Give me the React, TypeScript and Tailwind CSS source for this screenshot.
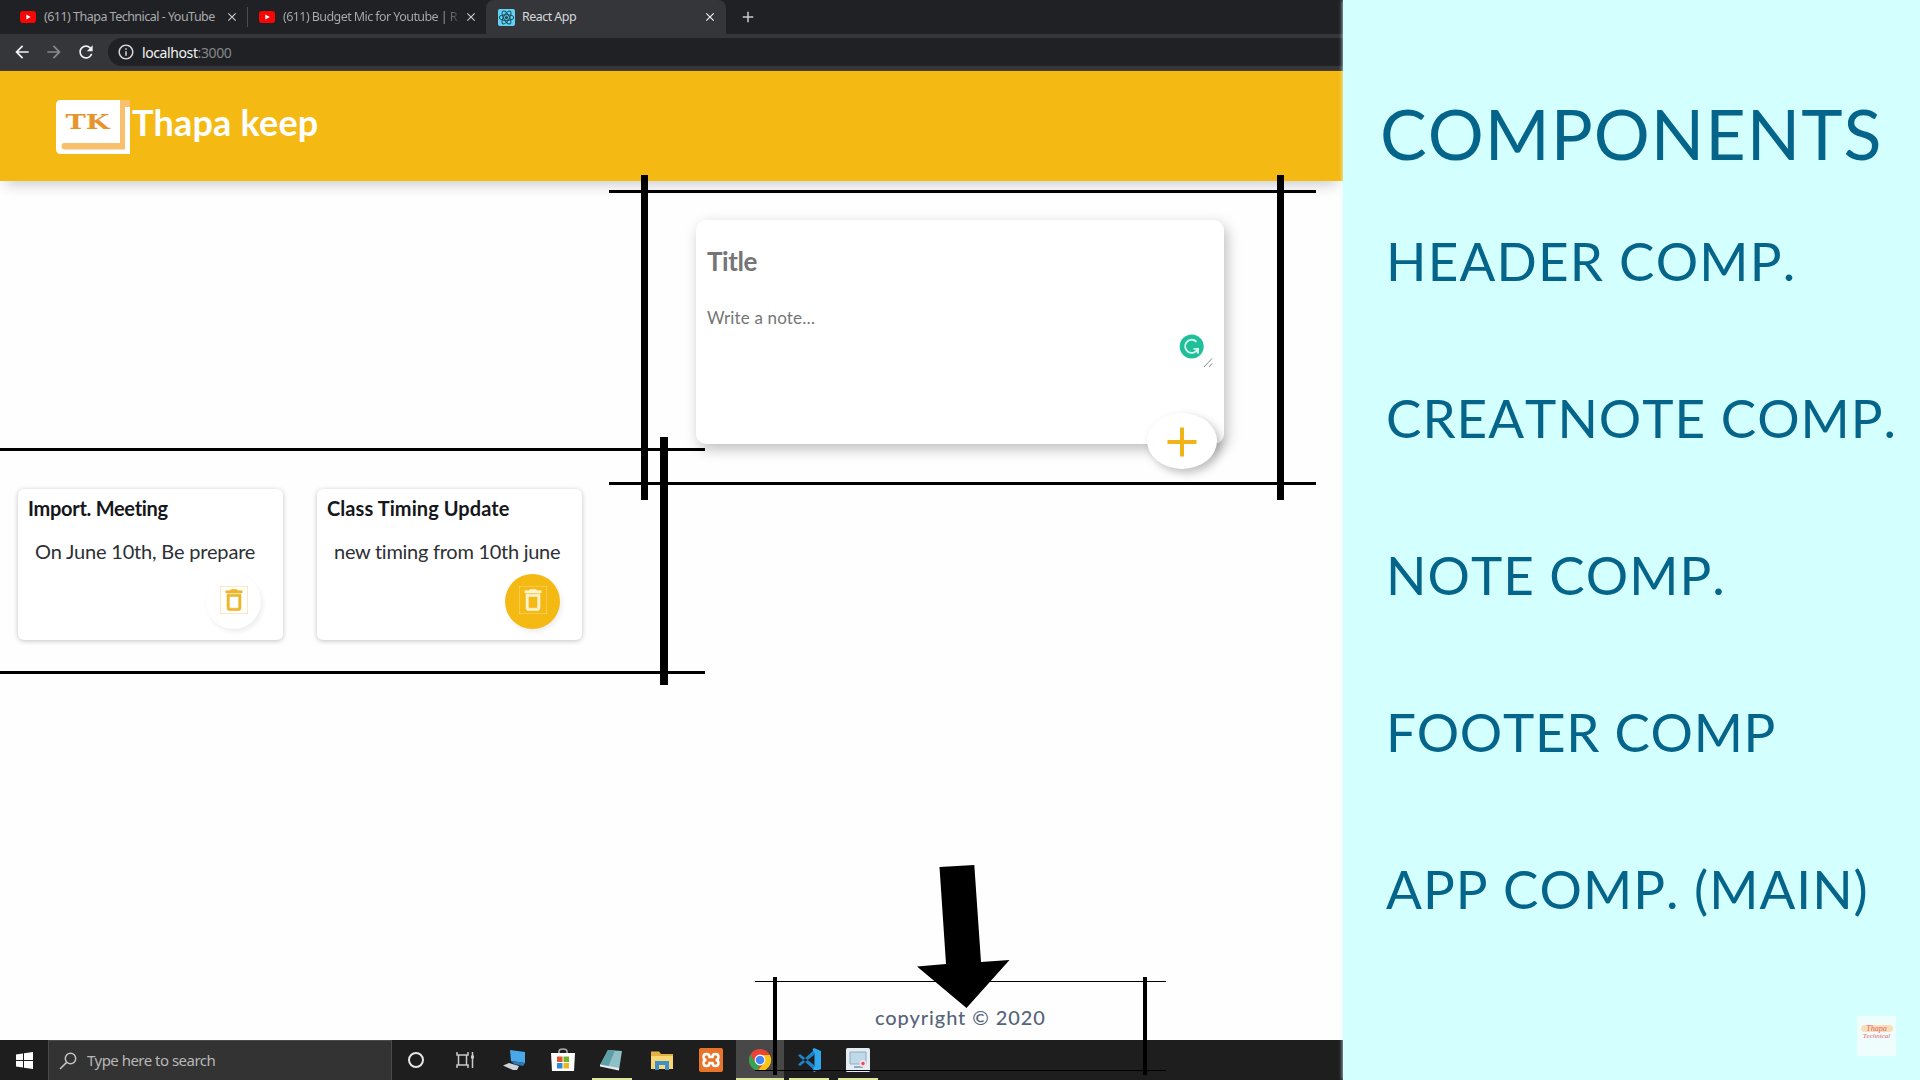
import React from "react";
import { MdArrowBack, MdArrowForward, MdRefresh, MdInfoOutline, MdClose, MdAdd, MdDeleteOutline } from "react-icons/md";

const YouTubeIcon = () => (
  <svg viewBox="0 0 16 12" className="h-3 w-4 shrink-0">
    <rect width="16" height="12" rx="3" fill="#f80606" />
    <path d="M6.3 3.4 10.8 6 6.3 8.6z" fill="#fff" />
  </svg>
);

const ReactIcon = () => (
  <svg viewBox="0 0 18 18" className="h-[17px] w-[17px] shrink-0">
    <rect width="18" height="18" rx="2" fill="#61d4f5" />
    <g fill="none" stroke="#1d4b5c" strokeWidth="1.1">
      <ellipse cx="9" cy="9" rx="7.6" ry="3" />
      <ellipse cx="9" cy="9" rx="7.6" ry="3" transform="rotate(60 9 9)" />
      <ellipse cx="9" cy="9" rx="7.6" ry="3" transform="rotate(120 9 9)" />
    </g>
    <circle cx="9" cy="9" r="1.7" fill="#1d4b5c" />
  </svg>
);

function BrowserChrome() {
  return (
    <div className="shrink-0 bg-[#35363a] font-['Noto_Sans',sans-serif]">
      <div className="flex h-[34px] items-center bg-[#202124] text-[12.5px] text-[#a9abae]">
        <div className="flex h-full w-[247px] items-center pl-5">
          <YouTubeIcon />
          <span className="ml-2 w-[181px] whitespace-nowrap tracking-[-0.52px]">(611) Thapa Technical - YouTube</span>
          <MdClose className="h-[14px] w-[14px] text-[#c8cacc]" />
        </div>
        <div className="h-5 w-px bg-[#4a4c50]" />
        <div className="flex h-full w-[238px] items-center pl-[11px]">
          <YouTubeIcon />
          <span className="ml-2 w-[181px] whitespace-nowrap bg-linear-to-r from-[#a9abae] from-88% to-[#202124] to-100% bg-clip-text tracking-[-0.57px] text-transparent">
            (611) Budget Mic for Youtube | R
          </span>
          <MdClose className="h-[14px] w-[14px] text-[#c8cacc]" />
        </div>
        <div className="flex h-full w-[240px] items-center rounded-t-lg bg-[#35363a] pl-3 text-[#d4d6d9]">
          <ReactIcon />
          <span className="ml-[7px] w-[181px] tracking-[-0.55px]">React App</span>
          <MdClose className="h-[14px] w-[14px] text-[#f1f3f4]" />
        </div>
        <MdAdd className="ml-[13px] h-[18px] w-[18px] text-[#c8cacc]" />
      </div>
      <div className="flex h-[37px] items-start border-b border-[#4d3f18] pt-1">
        <div className="flex h-7 w-[108px] items-center">
          <MdArrowBack className="ml-3 h-5 w-5 text-[#f1f3f4]" />
          <MdArrowForward className="ml-3 h-5 w-5 text-[#87898c]" />
          <MdRefresh className="ml-3 h-5 w-5 text-[#f1f3f4]" />
        </div>
        <div className="flex h-7 flex-1 items-center rounded-l-full bg-[#202124] pl-[9px]">
          <MdInfoOutline className="h-[18px] w-[18px] text-[#d4d6d9]" />
          <span className="ml-[7px] text-[14px] tracking-[-0.4px] text-[#85878a]">
            <span className="text-[#f1f3f4]">localhost</span>:3000
          </span>
        </div>
      </div>
    </div>
  );
}

const BookLogo = () => (
  <svg viewBox="0 0 74 54" className="mt-px h-[54px] w-[74px] shrink-0">
    <path d="M5 0H74V54H5Q0 54 0 49V5Q0 0 5 0Z" fill="#f8c06c" />
    <path d="M5 0H64V43H8Q5.500 43 5.500 46T8 49.500H69V7H74V54H5Q0 54 0 49V5Q0 0 5 0Z" fill="#fff" />
    <text x="9.500" y="29" textLength="44" lengthAdjust="spacingAndGlyphs" fill="#e6942c" className="font-['DejaVu_Serif',serif] text-[20px] font-bold">
      TK
    </text>
  </svg>
);

function Header() {
  return (
    <header className="relative z-10 flex h-[110px] shrink-0 bg-[#f5b914] pl-14 pt-[28px] shadow-[0_10px_12px_-6px_rgba(60,60,80,0.24)]">
      <BookLogo />
      <h1 className="ml-[2px] mt-px text-[36px] font-bold leading-[44px] tracking-[0.2px] text-white">Thapa keep</h1>
    </header>
  );
}

function CreateNote() {
  return (
    <section className="relative ml-[696px] mt-[39px] flex h-[224px] w-[528px] shrink-0 flex-col rounded-[10px] bg-white pl-[11px] pt-[25px] text-[#757575] shadow-[3px_5px_14px_rgba(0,0,0,0.26)]">
      <h2 className="text-[26px] font-bold leading-8 tracking-[-0.4px]">Title</h2>
      <p className="mt-[31px] text-[17px] leading-5 tracking-[0.15px]">Write a note…</p>
      <svg viewBox="0 0 36 36" className="absolute left-[482px] top-[112px] h-9 w-9">
        <circle cx="13.700" cy="14.500" r="12" fill="#1fbf99" />
        <path d="M18.500 9.800A6.600 6.600 0 1 0 19.500 17.500" fill="none" stroke="#d5f7ee" strokeWidth="1.8" />
        <path d="M15.500 16H21V21.500H18.800V17.800H15.500Z" fill="#d5f7ee" />
        <path d="M26 35 34 26.500M31 35 34 31.500" stroke="#888" strokeWidth="1" />
      </svg>
      <button className="absolute left-[451px] top-[193px] flex h-14 w-[70px] items-center justify-center rounded-[50%] bg-white shadow-[4px_4px_9px_rgba(0,0,0,0.25)]">
        <svg viewBox="0 0 30 30" className="mt-px h-[30px] w-[30px]">
          <path d="M15 .5V29.500M.5 15H29.500" stroke="#f0b418" strokeWidth="4" />
        </svg>
      </button>
    </section>
  );
}

type NoteProps = { title: string; body: string; titleClass: string; bodyClass: string; buttonClass: string };

function Note({ title, body, titleClass, bodyClass, buttonClass }: NoteProps) {
  return (
    <article className="flex h-[151px] w-[265px] flex-col rounded-md bg-white pl-[10px] pr-[22px] pt-[7px] shadow-[0_1px_5px_rgba(0,0,0,0.24)]">
      <h3 className={"whitespace-nowrap text-[20px] font-bold leading-6 text-[#15171a] " + titleClass}>{title}</h3>
      <p className={"mt-[19px] whitespace-nowrap pl-[7px] text-[20px] leading-6 text-[#2d2f33] " + bodyClass}>{body}</p>
      <button className={"mt-[11px] flex h-[55px] w-[55px] shrink-0 items-center justify-center self-end rounded-full " + buttonClass}>
        <MdDeleteOutline className="mb-[4px] h-7 w-7 stroke-current [stroke-width:0.5]" />
      </button>
    </article>
  );
}

const Line = ({ className }: { className: string }) => <div className={"absolute z-20 bg-black " + className} />;

function Markers() {
  return (
    <>
      <Line className="left-[609px] top-[190px] h-[3px] w-[707px]" />
      <Line className="left-[609px] top-[482px] h-[3px] w-[707px]" />
      <Line className="left-[641px] top-[175px] h-[325px] w-[7px]" />
      <Line className="left-[1277px] top-[175px] h-[325px] w-[7px]" />
      <Line className="left-0 top-[448px] h-[3px] w-[705px]" />
      <Line className="left-0 top-[671px] h-[3px] w-[705px]" />
      <Line className="left-[660px] top-[437px] h-[248px] w-[8px]" />
      <Line className="left-[755px] top-[981px] h-px w-[411px]" />
      <Line className="left-[755px] top-[1070px] h-px w-[411px]" />
      <Line className="left-[773px] top-[977px] h-[98px] w-[4px]" />
      <Line className="left-[1143px] top-[977px] h-[98px] w-[4px]" />
      <svg viewBox="0 0 93 143" className="absolute left-[917px] top-[865px] z-20 h-[143px] w-[93px]">
        <path d="M22.500 2 57.300 0 64 97 92.500 95 49.500 143 0 101.500 29 99Z" fill="#000" />
      </svg>
    </>
  );
}

const taskIcons: { width: string; state: string; icon: React.ReactNode }[] = [
  { width: "w-12", state: "", icon: <circle cx="12" cy="12" r="7" fill="none" stroke="#e6e6e6" strokeWidth="2" /> },
  {
    width: "w-[49px]",
    state: "",
    icon: (
      <g fill="none" stroke="#c9c9c9" strokeWidth="1.5">
        <path d="M4 4V7H15V4M4 20V17H15V20M5.500 7V17M13.500 7V17M19.500 4V20" />
        <path d="M18 9H21" strokeWidth="3" />
      </g>
    ),
  },
  {
    width: "w-[50px]",
    state: "",
    icon: (
      <>
        <path d="M8 2 23 4V15L9 13Z" fill="#4aa8e8" />
        <path d="M9 13 23 15 21 18 12 16Z" fill="#2b7cb8" />
        <path d="M1 17.500 7 15 17 18 15 22 11 22Z" fill="#cfd4d8" />
      </>
    ),
  },
  {
    width: "w-[48px]",
    state: "",
    icon: (
      <>
        <path d="M8 6V3.500Q8 1 12 1T16 3.500V6" fill="none" stroke="#aaa" strokeWidth="1.600" />
        <path d="M0 5H24L23 23H1Z" fill="#fff" />
        <path d="M6 8.500H11.500V14H6Z" fill="#e8532f" />
        <path d="M12.500 8.500H18V14H12.500Z" fill="#6fb52c" />
        <path d="M6 15H11.500V20.500H6Z" fill="#2c8fd6" />
        <path d="M12.500 15H18V20.500H12.500Z" fill="#f0b41c" />
      </>
    ),
  },
  {
    width: "w-[50px]",
    state: "open",
    icon: (
      <>
        <path d="M8 2 22 3 19 22 0 17Z" fill="#8fc0c6" />
        <path d="M8 2 15 2.500 8 19 0 17Z" fill="#5e9ea8" />
        <path d="M0 16.500 19 20V22.500L0 18.500Z" fill="#e6eceb" />
      </>
    ),
  },
  {
    width: "w-[49px]",
    state: "",
    icon: (
      <>
        <path d="M1 3.500H9L11 6H23V21H1Z" fill="#e3b341" />
        <path d="M1 8H23V21H1Z" fill="#f9d774" />
        <path d="M5 13H19V22H15V17H9V22H5Z" fill="#3f8fcb" />
      </>
    ),
  },
  {
    width: "w-[50px]",
    state: "",
    icon: (
      <>
        <rect width="24" height="24" rx="2" fill="#e8742c" />
        <path
          d="M7.500 6Q4.500 6 4.500 9T7.500 12Q4.500 12 4.500 15T7.500 18Q10.500 18 10.500 15H13.500Q13.500 18 16.500 18T19.500 15T16.500 12Q19.500 12 19.500 9T16.500 6Q13.500 6 13.500 9H10.500Q10.500 6 7.500 6Z"
          fill="none"
          stroke="#fff"
          strokeWidth="2.400"
        />
      </>
    ),
  },
  {
    width: "w-[48px]",
    state: "active",
    icon: (
      <g>
        <circle cx="12" cy="12" r="11" fill="#e94435" />
        <path d="M2.500 6.500 7.200 14.800 12 17 9.800 22.800A11 11 0 0 1 2.500 6.500Z" fill="#34a353" />
        <path d="M12 7H21.800A11 11 0 0 1 9.800 22.800L16.400 14.500Z" fill="#fbc516" />
        <circle cx="12" cy="12" r="5.400" fill="#fff" />
        <circle cx="12" cy="12" r="4.300" fill="#4285f4" />
      </g>
    ),
  },
  {
    width: "w-[50px]",
    state: "open",
    icon: (
      <>
        <path d="M1 7.500 3 6 17 17V20.500L16 21ZM1 16.500 3 18 17 7V3.500L16 3Z" fill="#1b85cc" />
        <path d="M17 0 24 3V21L17 24 15.500 22.500 17.500 18V6L15.500 1.500Z" fill="#2fa8ee" />
      </>
    ),
  },
  {
    width: "w-[48px]",
    state: "open",
    icon: (
      <>
        <rect width="24" height="24" rx="1.500" fill="#e4edf3" />
        <path d="M4 4H20V16H4Z" fill="#c0d9e8" stroke="#8fabc0" />
        <path d="M8 19H17" stroke="#8fabc0" strokeWidth="2" />
        <circle cx="17" cy="15.500" r="3.500" fill="#f4dfe2" />
        <circle cx="17" cy="15.500" r="1.700" fill="#d8505a" />
      </>
    ),
  },
];

function Taskbar() {
  return (
    <div className="flex h-10 shrink-0 bg-[#1e1e1e]">
      <div className="flex w-12 items-center justify-center">
        <svg viewBox="0 0 17 17" className="h-[17px] w-[17px]">
          <path d="M0 2.500 7 1.500V8H0ZM8 1.300 17 0V8H8ZM0 9H7V15.500L0 14.500ZM8 9H17V17L8 15.700Z" fill="#fff" />
        </svg>
      </div>
      <div className="flex w-[344px] items-center border border-b-0 border-[#4a4a4a] bg-[#333] pl-[10px]">
        <svg viewBox="0 0 18 18" className="h-[18px] w-[18px]">
          <g fill="none" stroke="#c4c4c4" strokeWidth="1.500">
            <circle cx="11.500" cy="6.500" r="5.200" />
            <path d="M7.600 10.400 1 17" />
          </g>
        </svg>
        <span className="ml-[10px] whitespace-nowrap font-['Noto_Sans',sans-serif] text-[15px] tracking-[-0.52px] text-[#b8b8b8]">
          Type here to search
        </span>
      </div>
      {taskIcons.map(({ width, state, icon }, i) => (
        <div key={i} className={"flex flex-col items-center " + width + (state === "active" ? " bg-[#484848]" : "")}>
          <svg viewBox="0 0 24 24" className="mt-2 h-6 w-6 overflow-visible">
            {icon}
          </svg>
          {state && <div className={"mt-auto h-[2px] bg-[#dfe89a] " + (state === "active" ? "w-12" : "w-10")} />}
        </div>
      ))}
    </div>
  );
}

const components = [
  { label: "HEADER COMP.", spacing: "tracking-[1.2px]" },
  { label: "CREATNOTE COMP.", spacing: "tracking-[1px]" },
  { label: "NOTE COMP.", spacing: "tracking-[1px]" },
  { label: "FOOTER COMP", spacing: "tracking-[0.7px]" },
  { label: "APP COMP. (MAIN)", spacing: "tracking-[1px]" },
];

function Outline() {
  return (
    <aside className="relative z-30 flex flex-1 flex-col whitespace-nowrap bg-[#d3fffe] pl-[37px] pt-[98px] font-['Lato',sans-serif] text-[#05648a] shadow-[0_0_4px_#d3fffe] [font-kerning:none]">
      <h2 className="text-[70px] leading-[70px] tracking-[1px]">COMPONENTS</h2>
      <ul className="ml-[6px] mt-[66px] flex flex-col gap-[104px] text-[53px] leading-[53px]">
        {components.map(({ label, spacing }) => (
          <li key={label} className={spacing}>
            {label}
          </li>
        ))}
      </ul>
      <div className="mb-6 mr-6 mt-auto flex h-10 w-[39px] flex-col items-center self-end bg-[#effdfd] pt-[9px] font-['Liberation_Serif',serif] text-[8px] italic leading-[9px] text-[#e5616b]">
        <span className="w-8 rounded-full bg-[#f9dfb9] text-center leading-[7px]">Thapa</span>
        <span className="text-[7px]">Technical</span>
      </div>
    </aside>
  );
}

export default function App() {
  return (
    <div className="flex h-[1080px] w-[1920px] overflow-hidden bg-white">
      <div className="relative flex w-[1343px] shrink-0 flex-col bg-[#fefefe] font-['Lato',sans-serif]">
        <BrowserChrome />
        <Header />
        <main className="flex flex-1 flex-col">
          <CreateNote />
          <section className="ml-[18px] mt-[45px] flex gap-[34px]">
            <Note
              title="Import. Meeting"
              body="On June 10th, Be prepare"
              titleClass="tracking-[-0.28px]"
              bodyClass="tracking-[-0.18px]"
              buttonClass="text-[#ecb62a] shadow-[2px_3px_5px_rgba(0,0,0,0.07)]"
            />
            <Note
              title="Class Timing Update"
              body="new timing from 10th june"
              titleClass="tracking-[0.08px]"
              bodyClass="tracking-[-0.27px]"
              buttonClass="bg-[#f5b914] text-[#fff3cf] shadow-[2px_3px_5px_rgba(0,0,0,0.07)]"
            />
          </section>
          <footer className="mb-[11px] ml-[875px] mt-auto text-[20px] font-medium leading-6 tracking-[0.91px] text-[#56657a]">
            copyright © 2020
          </footer>
        </main>
        <Taskbar />
        <Markers />
      </div>
      <Outline />
    </div>
  );
}
